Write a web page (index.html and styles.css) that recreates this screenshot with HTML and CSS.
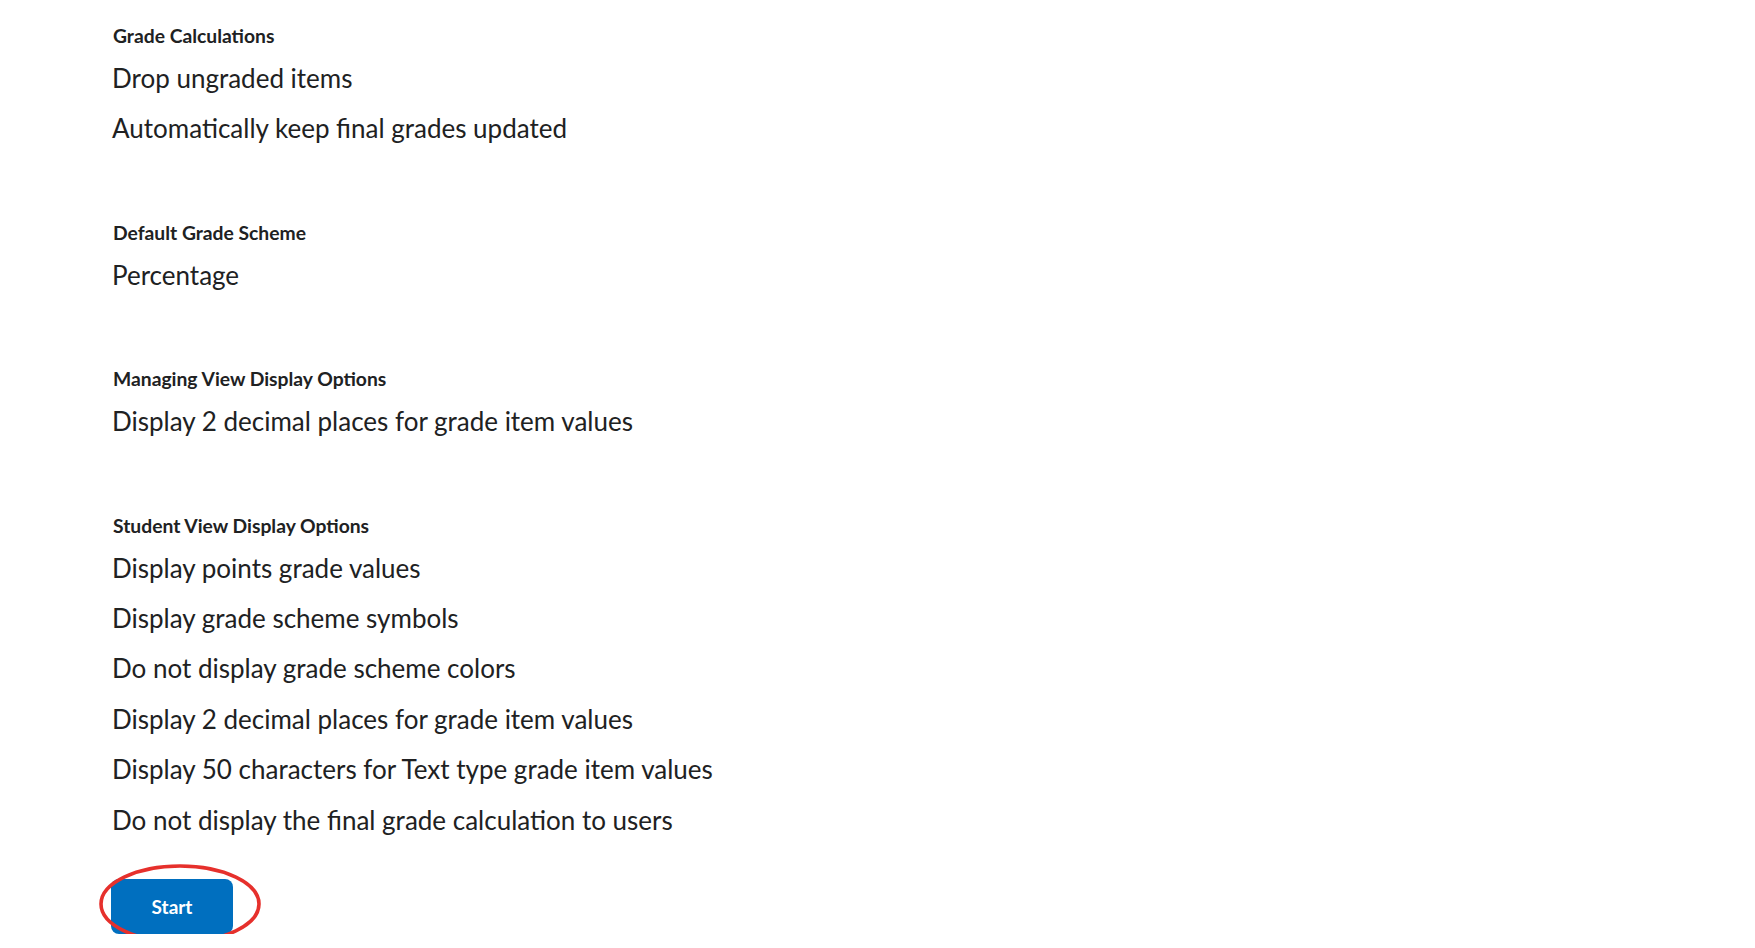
FILE: index.html
```html
<!DOCTYPE html>
<html lang="en">
<head>
<meta charset="utf-8">
<title>Grade Setup Summary</title>
<link rel="stylesheet" href="styles.css">
</head>
<body>
<main class="page">
  <section class="group">
    <h2 class="group-title">Grade Calculations</h2>
    <p class="item">Drop ungraded items</p>
    <p class="item">Automatically keep final grades updated</p>
  </section>
  <section class="group">
    <h2 class="group-title">Default Grade Scheme</h2>
    <p class="item">Percentage</p>
  </section>
  <section class="group">
    <h2 class="group-title">Managing View Display Options</h2>
    <p class="item">Display 2 decimal places for grade item values</p>
  </section>
  <section class="group">
    <h2 class="group-title">Student View Display Options</h2>
    <p class="item">Display points grade values</p>
    <p class="item">Display grade scheme symbols</p>
    <p class="item">Do not display grade scheme colors</p>
    <p class="item">Display 2 decimal places for grade item values</p>
    <p class="item">Display 50 characters for Text type grade item values</p>
    <p class="item">Do not display the final grade calculation to users</p>
  </section>
  <div class="actions">
    <button class="btn-primary" type="button">Start</button>
    <svg class="highlight" width="166" height="84" viewBox="0 0 166 84" aria-hidden="true">
      <ellipse cx="83" cy="42" rx="79" ry="38" fill="none" stroke="#e6302c" stroke-width="3.6"/>
    </svg>
  </div>
</main>
</body>
</html>
```
FILE: styles.css
```css
html, body {
  margin: 0;
  padding: 0;
  background: #ffffff;
}

body {
  font-family: Lato, "Open Sans", "Liberation Sans", sans-serif;
  color: #202122;
}

.page {
  padding: 24px 0 0 112px;
  display: flex;
  flex-direction: column;
  align-items: flex-start;
}

.group {
  display: flex;
  flex-direction: column;
  margin-bottom: 67px;
}

.group:last-of-type {
  margin-bottom: 0;
}

.group-title {
  margin: 0 0 5px 1px;
  font-size: 19.3px;
  line-height: 24px;
  font-weight: 700;
  color: #202122;
}

.item {
  margin: 0;
  font-size: 26px;
  line-height: 50.4px;
  font-weight: 400;
  color: #202122;
}

.actions {
  position: relative;
  margin: 34px 0 0 -1px;
}

.btn-primary {
  display: block;
  width: 122px;
  height: 55px;
  border: none;
  border-radius: 8px;
  background: #006fbf;
  color: #ffffff;
  font-family: Lato, "Open Sans", "Liberation Sans", sans-serif;
  font-size: 19px;
  font-weight: 700;
  padding: 0;
  cursor: pointer;
}

.highlight {
  position: absolute;
  left: -14px;
  top: -17px;
  pointer-events: none;
}
```
